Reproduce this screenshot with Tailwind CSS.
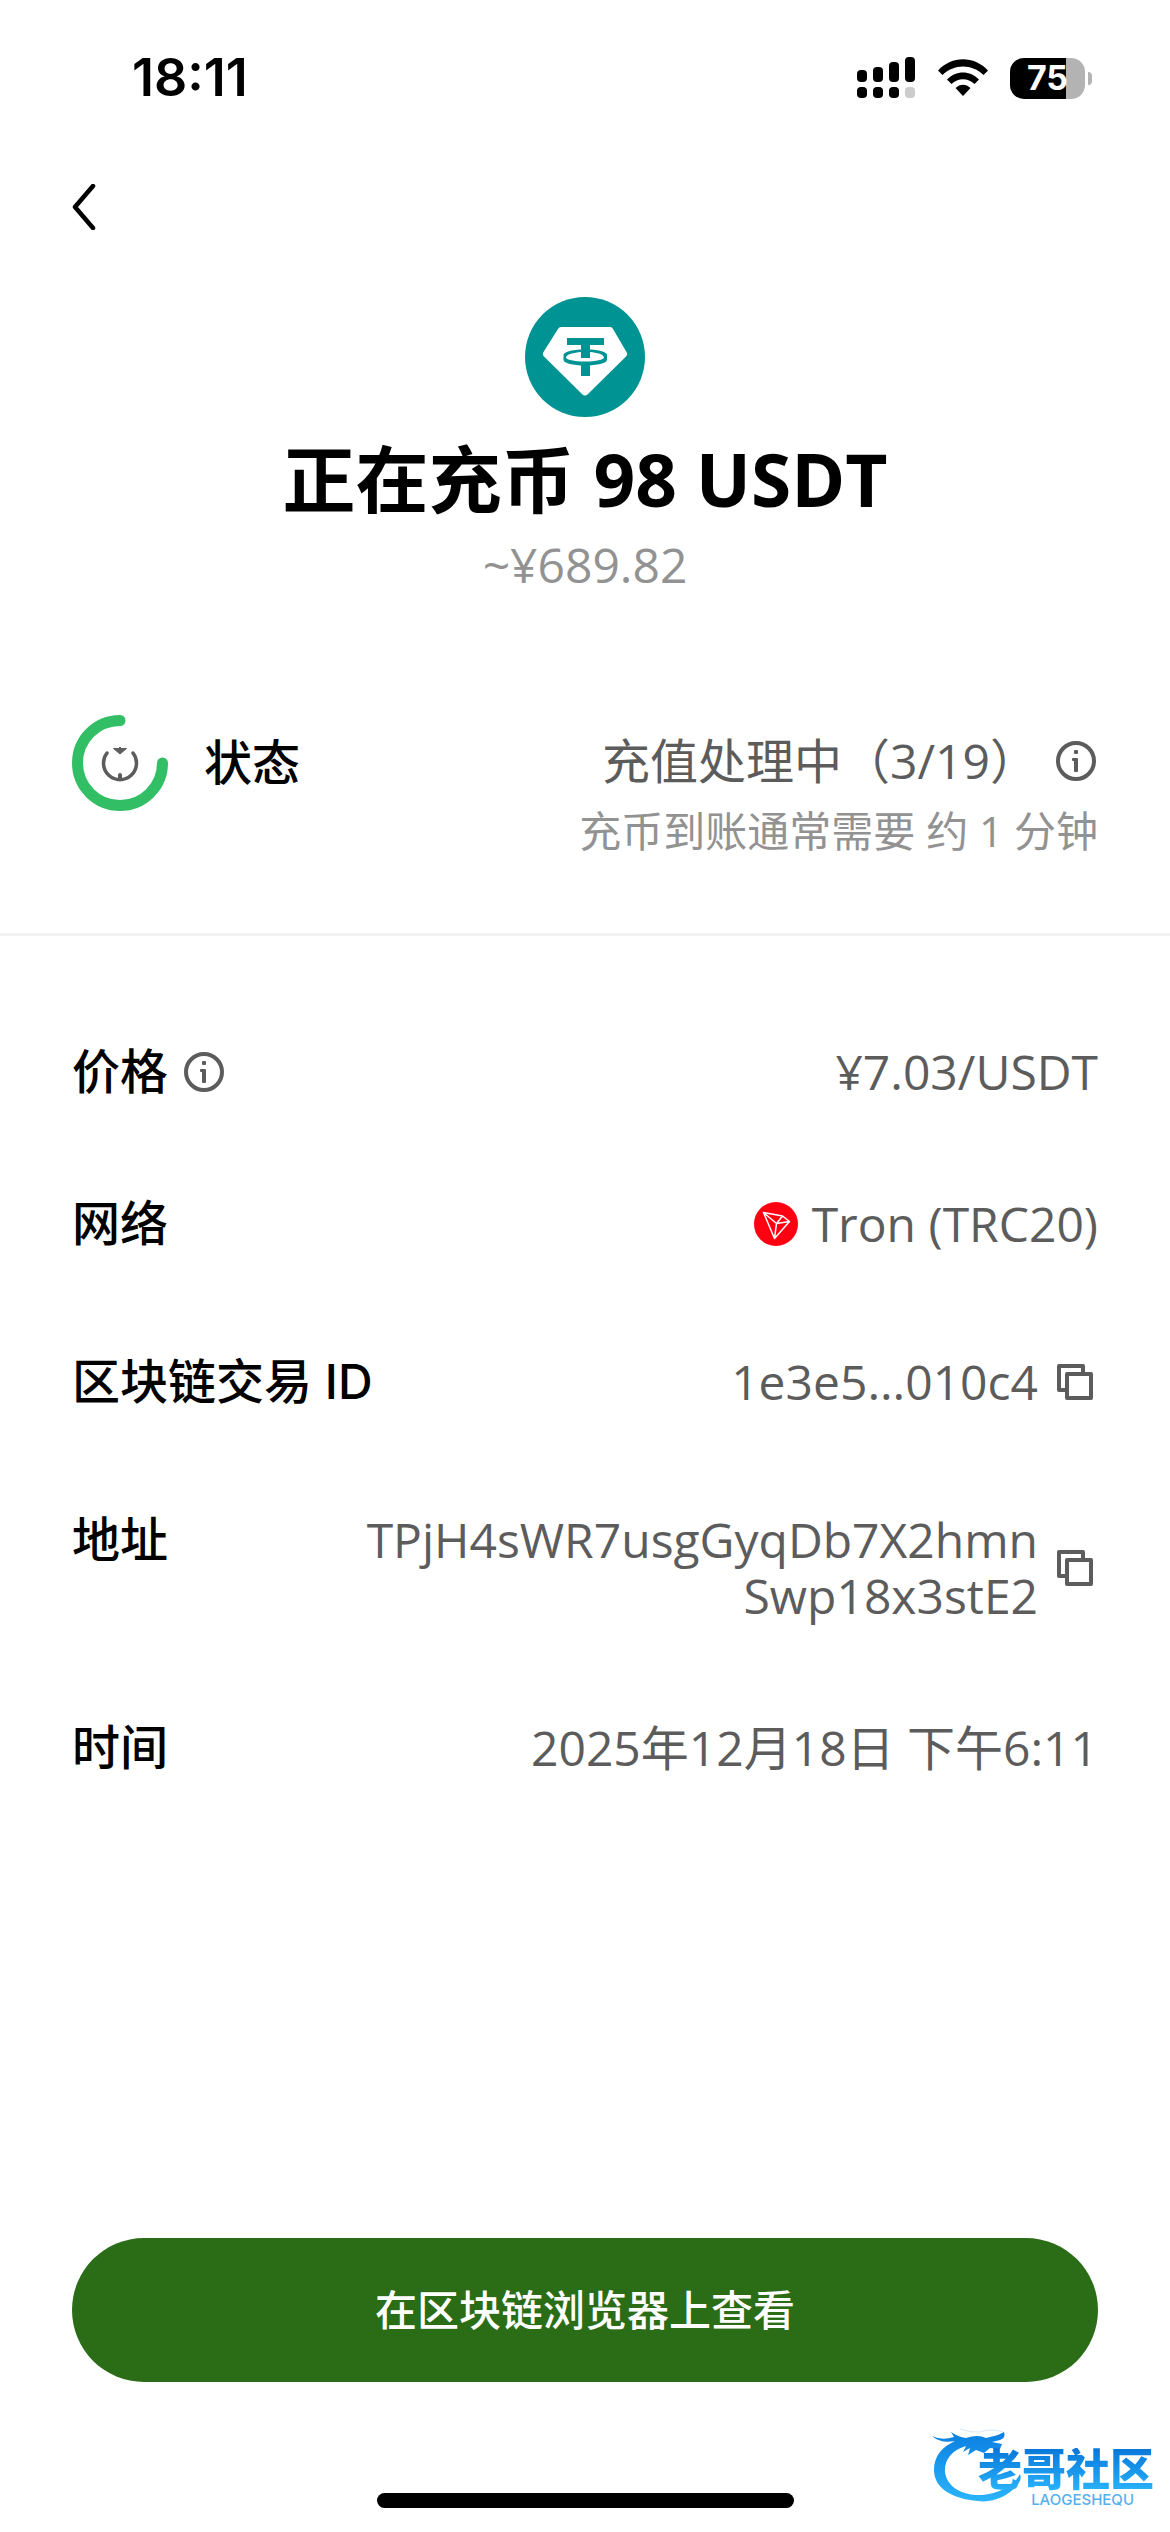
<!DOCTYPE html>
<html lang="zh-CN">
	<head>
		<meta charset="UTF-8" />
		<meta name="viewport" content="width=device-width, initial-scale=1.0" />
		<script src="https://cdn.jsdelivr.net/npm/@tailwindcss/browser@4"></script>
		<title>正在充币 98 USDT</title>
	</head>
	<body class="bg-white">
		<div
			class="relative flex min-h-screen flex-col bg-white font-['Open_Sans','Noto_Sans_CJK_SC',sans-serif] text-[48px] leading-[56px] text-[#5c5c5c]"
		>
			<!-- status bar -->
			<div class="flex h-[156px] items-center justify-between pr-[78px] pl-[132px]">
				<span class="font-['Inter',sans-serif] text-[52px] font-semibold text-black">18:11</span>
				<div class="flex items-center gap-[22px]">
					<svg class="h-[42px] w-[60px]" viewBox="0 0 60 42">
						<rect x="1" y="13" width="10" height="12" rx="4" />
						<rect x="17" y="10" width="10" height="15" rx="4" />
						<rect x="33" y="5" width="10" height="20" rx="4" />
						<rect x="49" y="0" width="10" height="25" rx="4" />
						<rect x="1" y="30" width="10" height="11" rx="4" />
						<rect x="17" y="30" width="10" height="11" rx="4" />
						<rect x="33" y="30" width="10" height="11" rx="4" />
						<rect x="49" y="30" width="10" height="11" rx="4" fill="#ccc" />
					</svg>
					<svg class="h-[38px] w-[50px]" viewBox="0 0 50 38">
						<path d="M0 11.5C14-3.5 36-3.5 50 11.5L45.500 16C34 4.500 16 4.500 4.500 16Z" />
						<path d="M9 20.500C18 11 32 11 41 20.500L36.500 25C30 18.500 20 18.500 13.500 25Z" />
						<path d="M17.500 29C22 24.500 28 24.500 32.500 29L25 37Z" />
					</svg>
					<div class="flex items-center gap-[3px]">
						<div
							class="flex h-[41px] w-[75px] items-center justify-center rounded-[14px] bg-linear-to-r from-black from-75% to-[#b3b3b3] to-75% font-['Inter',sans-serif] text-[34px] font-bold text-white"
						>
							75
						</div>
						<div class="h-[13px] w-[4px] rounded-r-full bg-[#b3b3b3]"></div>
					</div>
				</div>
			</div>

			<header class="flex h-[141px] px-[72px] pt-[28px]">
				<button class="h-[46px] w-6" aria-label="返回">
					<svg class="h-[46px] w-6" viewBox="0 0 24 46" fill="none" stroke="black" stroke-width="4.500" stroke-linecap="round" stroke-linejoin="round">
						<path d="M21 2L3 23L21 44" />
					</svg>
				</button>
			</header>

			<main class="flex flex-1 flex-col">
				<section class="flex flex-col items-center">
					<svg class="size-[120px]" viewBox="0 0 120 120">
						<circle cx="60" cy="60" r="60" fill="#009393" />
						<path d="M36 30H85Q87 30 88 32L101.500 55Q103 57.500 101 59.500L63 97Q60 100 57 97L19 59.500Q17 57.500 18.500 55L33 32Q34 30 36 30Z" fill="white" />
						<path d="M42 41H79V48H65V61H56V48H42Z" fill="#009393" />
						<path d="M56 67H65V79H56Z" fill="#009393" />
						<path fill-rule="evenodd" d="M56 52.500C45 53 38.500 55.500 38.500 58V63C38.500 66 48 68.500 60 68.500S82 66 82 63V58C82 55.500 76 53 65 52.500V55C72 55.500 79 57.500 79 60.500C79 62.500 71 64.500 60 64.500S41 62.500 41 60.500C41 57.500 49 55.500 56 55Z" fill="#009393" />
					</svg>
					<h1 class="mt-5 text-[73px] leading-[84px] font-bold text-black">正在充币 98 USDT</h1>
					<p class="mt-4 text-[#929292]">~¥689.82</p>
				</section>

				<!-- deposit progress -->
				<section class="mt-[122px] flex justify-between border-b-[3px] border-[#f2f2f2] px-[72px] pb-[74px]">
					<div class="flex h-24 items-center gap-9">
						<svg class="size-24" viewBox="0 0 96 96" fill="none">
							<path d="M48 5.500A42.500 42.500 0 1 0 90.500 48" stroke="#32be64" stroke-width="11" stroke-linecap="round" />
							<path d="M35 38A16.500 16.500 0 1 0 61 38" stroke="#5c5c5c" stroke-width="3.500" stroke-linecap="round" />
							<path d="M41.500 33.500H46.500L48 32L49.500 33.500H54.500L48 39Z" fill="#5c5c5c" stroke="#5c5c5c" />
							<path d="M48 60V64" stroke="#5c5c5c" stroke-width="4" stroke-linecap="round" />
						</svg>
						<h2 class="font-['Inter','Noto_Sans_CJK_SC',sans-serif] font-medium text-black">状态</h2>
					</div>
					<div class="flex flex-col items-end pt-4">
						<div class="flex h-[60px] items-center gap-4">
							<p>充值处理中（3/19）</p>
							<button aria-label="状态说明">
								<svg class="size-[44px]" viewBox="0 0 44 44" fill="#5c5c5c">
									<circle cx="22" cy="22" r="18" fill="none" stroke="#5c5c5c" stroke-width="4" />
									<rect x="20" y="11" width="4" height="4" rx="1" />
									<path d="M19 19H23Q24 19 24 20V32Q24 33 23 33H21Q20 33 20 32V22H19Q18 22 18 21V20Q18 19 19 19Z" />
								</svg>
							</button>
						</div>
						<p class="mt-3 text-[42px] text-[#929292]">充币到账通常需要 约 1 分钟</p>
					</div>
				</section>

				<dl class="flex flex-col gap-24 px-[72px] pt-[108px]">
					<div class="flex justify-between">
						<dt class="flex items-center gap-[14px] font-['Inter','Noto_Sans_CJK_SC',sans-serif] font-medium text-black">
							价格
							<button aria-label="价格说明">
								<svg class="size-[44px]" viewBox="0 0 44 44" fill="#5c5c5c">
									<circle cx="22" cy="22" r="18" fill="none" stroke="#5c5c5c" stroke-width="4" />
									<rect x="20" y="11" width="4" height="4" rx="1" />
									<path d="M19 19H23Q24 19 24 20V32Q24 33 23 33H21Q20 33 20 32V22H19Q18 22 18 21V20Q18 19 19 19Z" />
								</svg>
							</button>
						</dt>
						<dd>¥7.03/USDT</dd>
					</div>
					<div class="flex justify-between">
						<dt class="font-['Inter','Noto_Sans_CJK_SC',sans-serif] font-medium text-black">网络</dt>
						<dd class="flex items-center gap-[14px]">
							<svg class="size-[44px]" viewBox="0 0 44 44">
								<circle cx="22" cy="22" r="22" fill="#ff0013" />
								<path d="M9.500 10.500L28.500 14L35.500 19.500L20.500 36.500ZM9.500 10.500L22.500 21.500L20.500 36.500M22.500 21.500L35.500 19.500M22.500 21.500L28.500 14" fill="none" stroke="white" stroke-width="1.500" stroke-linejoin="round" />
							</svg>
							Tron (TRC20)
						</dd>
					</div>
					<div class="flex items-center justify-between">
						<dt class="font-['Inter','Noto_Sans_CJK_SC',sans-serif] font-medium text-black">区块链交易 ID</dt>
						<dd class="flex items-center gap-[14px]">
							1e3e5...010c4
							<button class="flex h-[68px] items-center" aria-label="复制交易 ID">
								<svg class="size-[46px]" viewBox="0 0 46 46" fill="none" stroke="#5c5c5c" stroke-width="4" stroke-linejoin="round">
									<path d="M31 14V7H7V31H14" />
									<rect x="15" y="15" width="24" height="24" />
								</svg>
							</button>
						</dd>
					</div>
					<div class="flex justify-between">
						<dt class="font-['Inter','Noto_Sans_CJK_SC',sans-serif] font-medium text-black">地址</dt>
						<dd class="flex items-center gap-[14px]">
							<span class="text-right">TPjH4sWR7usgGyqDb7X2hmn<br />Swp18x3stE2</span>
							<button class="flex h-[68px] items-center" aria-label="复制地址">
								<svg class="size-[46px]" viewBox="0 0 46 46" fill="none" stroke="#5c5c5c" stroke-width="4" stroke-linejoin="round">
									<path d="M31 14V7H7V31H14" />
									<rect x="15" y="15" width="24" height="24" />
								</svg>
							</button>
						</dd>
					</div>
					<div class="flex justify-between">
						<dt class="font-['Inter','Noto_Sans_CJK_SC',sans-serif] font-medium text-black">时间</dt>
						<dd>2025年12月18日 下午6:11</dd>
					</div>
				</dl>
			</main>

			<footer class="flex flex-col items-center px-[72px] pb-6">
				<button class="h-36 w-full rounded-full bg-[#2b6c17] text-[42px] font-medium text-white">在区块链浏览器上查看</button>
				<div class="mt-[111px] h-[15px] w-[417px] rounded-full bg-black"></div>
			</footer>

			<!-- community watermark -->
			<div class="absolute right-4 bottom-6 flex h-[80px] w-[222px] flex-col items-end justify-end font-['Inter','Noto_Sans_CJK_SC',sans-serif]">
				<svg class="absolute inset-0 h-[80px] w-[92px]" viewBox="0 0 92 80">
					<defs>
						<linearGradient id="wave" x1="0" y1="0" x2="0" y2="1">
							<stop offset="0" stop-color="#0b7fe0" />
							<stop offset="1" stop-color="#2bb4fb" />
						</linearGradient>
					</defs>
					<path
						d="M0 8Q10 13 22 9L19 4Q26 9 34 10Q46 6 54 10L66 7L72 4Q74 10 68 12L60 14L70 16L68 21L58 20L52 25L44 22L36 27L38 20L31 24L34 18C20 22 12 32 13 44C15 60 32 68 50 67C68 65 82 58 88 46Q90 52 86 56C76 69 60 75 46 73C20 71 2 60 2 42C2 28 10 19 23 13Q9 16 0 8Z"
						fill="url(#wave)"
					/>
					<path d="M28 1Q38 5 48 4Q60 0 71 4" fill="none" stroke="#d5e8f8" stroke-width="1" />
				</svg>
				<span class="relative bg-linear-to-b from-[#0876d8] to-[#2bb4fb] bg-clip-text text-[44px] leading-[44px] font-black text-transparent">老哥社区</span>
				<span class="mr-5 text-[15px] leading-[16px] font-medium text-[#55b0ef]">LAOGESHEQU</span>
			</div>
		</div>
	</body>
</html>
